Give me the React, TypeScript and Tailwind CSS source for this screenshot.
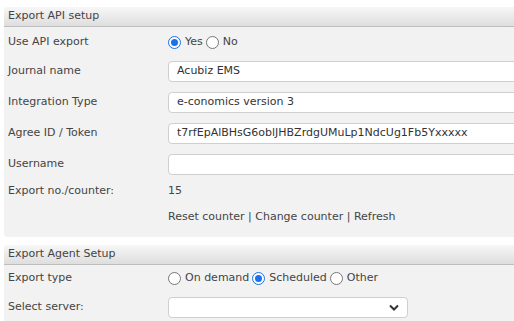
import React from "react";

const font = { fontFamily: '"DejaVu Sans", Verdana, sans-serif' };

function Row({ label, children, h = "h-[31px]" }: { label: string; children?: React.ReactNode; h?: string }) {
  return (
    <div className={`flex items-center ${h}`}>
      <div className="w-[164px] shrink-0 pl-[4px]">{label}</div>
      <div className="flex items-center flex-1">{children}</div>
    </div>
  );
}

function TextBox({ value }: { value?: string }) {
  return (
    <div className="h-[21px] w-[400px] rounded-[4px] border border-[#cfcfcf] bg-white pl-[8px] flex items-center text-[#333]">
      {value}
    </div>
  );
}

function Radio({ checked }: { checked?: boolean }) {
  return (
    <span
      className={`inline-block shrink-0 w-[13px] h-[13px] rounded-full border ${checked ? "border-[#1a73e8]" : "border-[#767676]"} bg-white relative mr-[4px]`}
    >
      {checked && <span className="absolute left-[2px] top-[2px] w-[7px] h-[7px] rounded-full bg-[#1a73e8]" />}
    </span>
  );
}

function Header({ title }: { title: string }) {
  return (
    <div className="h-[20px] flex items-center pl-[4px] rounded-t-[4px] border-b border-[#bdbdbd] bg-gradient-to-b from-[#f7f7f7] to-[#dedede]">
      {title}
    </div>
  );
}

export default function App() {
  return (
    <div className="w-[514px] h-[321px] overflow-hidden bg-white text-[11px] text-[#444]" style={font}>
      <div className="pt-[7px] pl-[4px]">
        <div className="w-[560px] rounded-[4px] bg-[#f2f2f2] pb-[4px]">
          <Header title="Export API setup" />
          <div className="pt-[1px]">
            <Row label="Use API export" h="h-[28px]">
              <Radio checked />
              <span className="mr-[3px]">Yes</span>
              <Radio />
              <span>No</span>
            </Row>
            <Row label="Journal name">
              <TextBox value="Acubiz EMS" />
            </Row>
            <Row label="Integration Type">
              <TextBox value="e-conomics version 3" />
            </Row>
            <Row label="Agree ID / Token">
              <TextBox value="t7rfEpAlBHsG6oblJHBZrdgUMuLp1NdcUg1Fb5Yxxxxx" />
            </Row>
            <Row label="Username">
              <TextBox />
            </Row>
            <Row label="Export no./counter:" h="h-[22px]">
              <span>15</span>
            </Row>
            <Row label="" h="h-[31px]">
              <span>Reset counter | Change counter | Refresh</span>
            </Row>
          </div>
        </div>
        <div className="mt-[8px] w-[560px] rounded-[4px] bg-[#f2f2f2] pb-[8px]">
          <Header title="Export Agent Setup" />
          <Row label="Export type" h="h-[27px]">
            <Radio />
            <span className="mr-[3px]">On demand</span>
            <Radio checked />
            <span className="mr-[3px]">Scheduled</span>
            <Radio />
            <span>Other</span>
          </Row>
          <Row label="Select server:">
            <div className="h-[21px] w-[240px] rounded-[4px] border border-[#cfcfcf] bg-white flex items-center justify-end pr-[8px]">
              <svg width="10" height="7" viewBox="0 0 10 7">
                <path d="M1 1.5 L5 5.5 L9 1.5" stroke="#333" strokeWidth="2" fill="none" />
              </svg>
            </div>
          </Row>
        </div>
      </div>
    </div>
  );
}
